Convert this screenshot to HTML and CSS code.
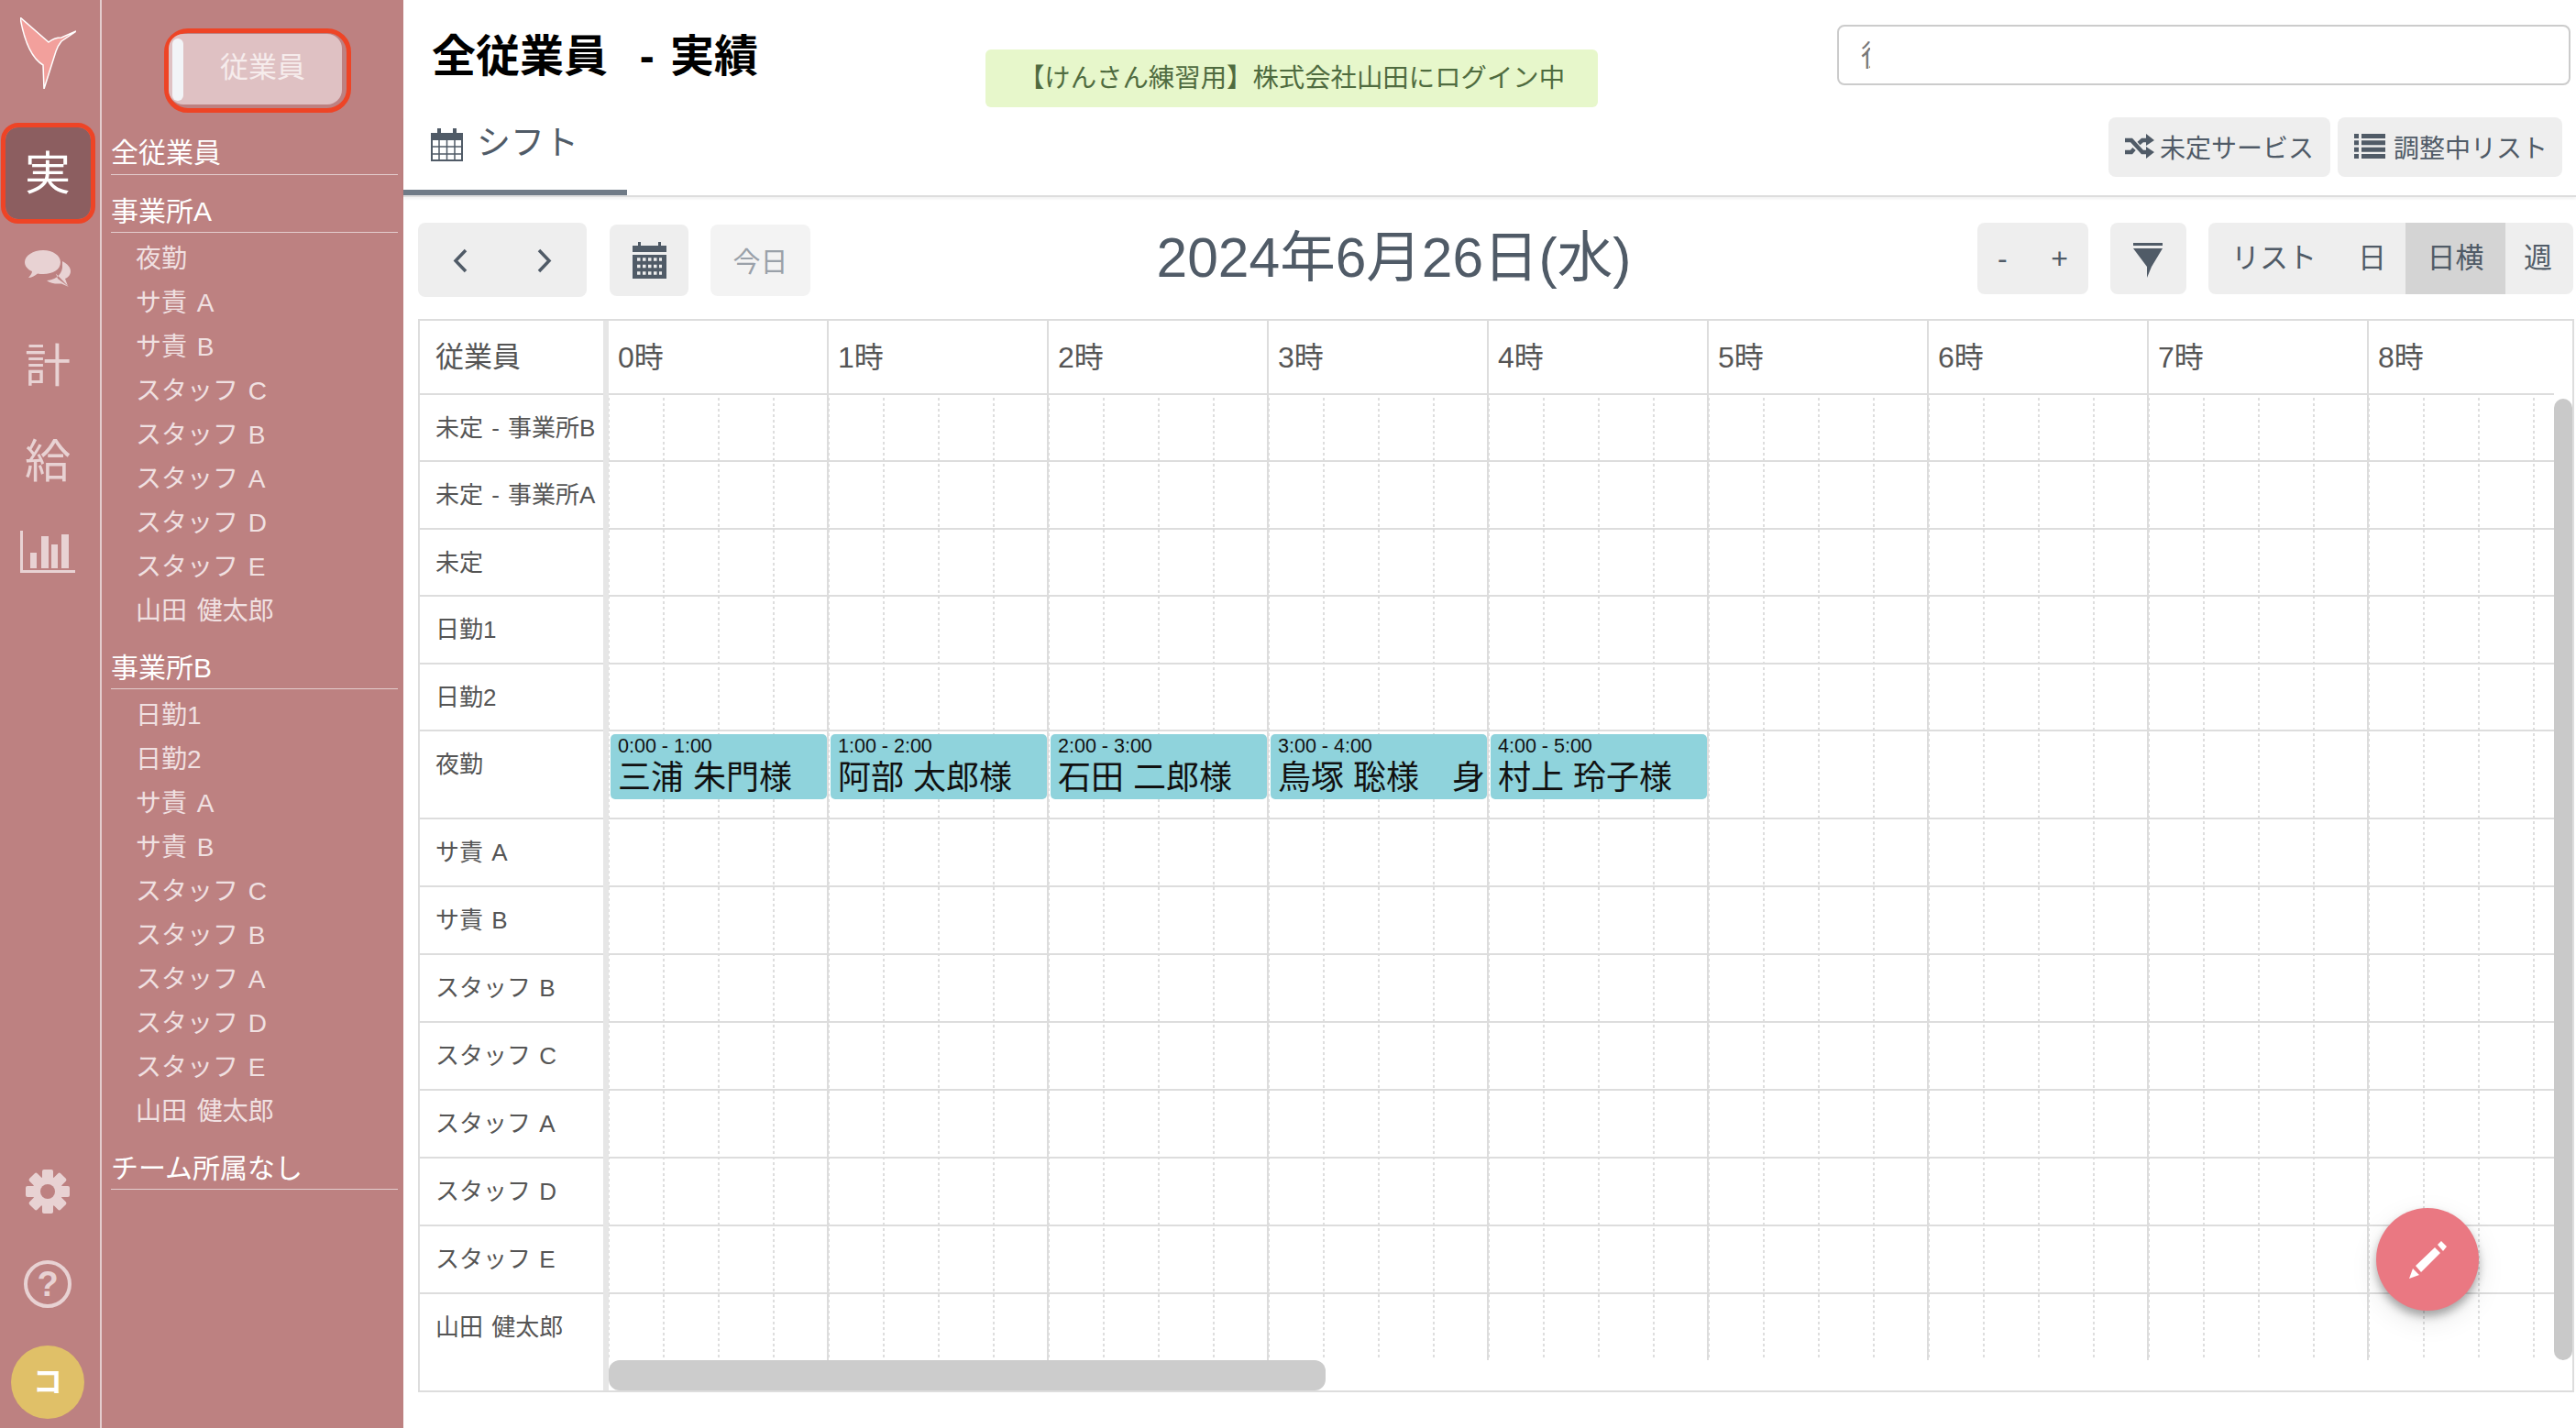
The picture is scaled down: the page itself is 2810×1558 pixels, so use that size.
FILE: index.html
```html
<!DOCTYPE html>
<html lang="ja">
<head>
  <meta charset="UTF-8" />
  <title>全従業員 - 実績</title>
  <link rel="stylesheet" href="styles.css">
</head>
<body>
  <nav class="rail">
    <svg class="logo" viewBox="0 0 61 78">
      <path d="M0 0 L31 27 Q37 22 45 22 L61 15 L45 26 Q41 31 39 37 L26 78 L25 52 Q7 41 0 0Z" fill="#f2a09c" stroke="#fff" stroke-width="1.5"/>
    </svg>
    <a class="rail-active">実</a>
    <svg class="rail-chat" viewBox="0 0 50 40">
      <path d="M34 25.5 L36 31 L48 40 L40 36.5 C33 37 28 36 24 33 C31 33 40 28 41 19 L41 12 C47 15 50 19 50 23 C50 27 47 30 44 31 L47 39 Z" fill="#e8d2d3"/>
      <path d="M20 0 C31 0 39 6 39 13 C39 21 31 26 20 26 C18 26 16 26 14 25.5 C11 28 7 30 4 30 C6 28 8 25 8 23 C3 21 0 17 0 13 C0 6 9 0 20 0Z" fill="#e8d2d3"/>
    </svg>
    <a class="rail-kanji rail-kei">計</a>
    <a class="rail-kanji rail-kyu">給</a>
    <svg class="rail-chart" viewBox="0 0 60 46">
      <path d="M0 0H3V43H60V46H0Z M11 24H18V41H11Z M23 6H31V41H23Z M34 15H41V41H34Z M45 4H53V41H45Z" fill="#e8d2d3" fill-rule="evenodd"/>
    </svg>
    <svg class="rail-gear" viewBox="0 0 48 48">
      <g fill="#e8d2d3">
        <rect x="18" y="0" width="12" height="48" rx="2"/>
        <rect x="18" y="0" width="12" height="48" rx="2" transform="rotate(45 24 24)"/>
        <rect x="18" y="0" width="12" height="48" rx="2" transform="rotate(90 24 24)"/>
        <rect x="18" y="0" width="12" height="48" rx="2" transform="rotate(135 24 24)"/>
      </g>
      <circle cx="24" cy="24" r="12" fill="none" stroke="#e8d2d3" stroke-width="9"/>
      <circle cx="24" cy="24" r="8" fill="#bd8181"/>
    </svg>
    <span class="rail-help">?</span>
    <span class="avatar">コ</span>
  </nav>

  <aside class="side">
    <div class="switch-ring">
      <div class="switch"><i class="knob"></i><span class="switch-label">従業員</span></div>
    </div>
    <div class="team-title team-first">全従業員</div>
    <div class="team-title">事業所A</div>
    <ul class="team">
      <li>夜勤</li>
      <li>サ責 A</li>
      <li>サ責 B</li>
      <li>スタッフ C</li>
      <li>スタッフ B</li>
      <li>スタッフ A</li>
      <li>スタッフ D</li>
      <li>スタッフ E</li>
      <li>山田 健太郎</li>
    </ul>
    <div class="team-title">事業所B</div>
    <ul class="team">
      <li>日勤1</li>
      <li>日勤2</li>
      <li>サ責 A</li>
      <li>サ責 B</li>
      <li>スタッフ C</li>
      <li>スタッフ B</li>
      <li>スタッフ A</li>
      <li>スタッフ D</li>
      <li>スタッフ E</li>
      <li>山田 健太郎</li>
    </ul>
    <div class="team-title">チーム所属なし</div>
  </aside>

  <main class="main">
    <div class="head-top">
      <h1 class="page-title">全従業員  - 実績</h1>
      <div class="login-note">【けんさん練習用】株式会社山田にログイン中</div>
      <div class="search"><span class="search-text">従</span></div>
    </div>

    <div class="head-tabs">
      <a class="tab">
        <svg class="tab-icon" viewBox="0 0 35 39">
          <path d="M1 8H34V37H1Z" fill="none" stroke="#505b67" stroke-width="2"/>
          <path d="M0 7H35V15H0Z M7 2H11V10H7Z M24 2H28V10H24Z" fill="#505b67"/>
          <path d="M0 22H35M0 30H35M9 14V38M17.500 14V38M26 14V38" stroke="#505b67" stroke-width="1.500"/>
        </svg>
        シフト
      </a>
      <div class="head-btns">
        <button class="head-btn">
          <svg class="shuffle" viewBox="0 0 32 27">
            <path d="M0 7H7L19 20H24M0 20H7L10 16.500M15 10.500L19 7H24" fill="none" stroke="#505b67" stroke-width="4.500"/>
            <path d="M23 0L32 7L23 13Z M23 14L32 20L23 27Z" fill="#505b67"/>
          </svg>未定サービス
        </button>
        <button class="head-btn">
          <svg class="list-icon" viewBox="0 0 34 27">
            <path d="M0 0H5V5H0Z M8 0H34V5H8Z M0 7.300H5V12.300H0Z M8 7.300H34V12.300H8Z M0 14.700H5V19.700H0Z M8 14.700H34V19.700H8Z M0 22H5V27H0Z M8 22H34V27H8Z" fill="#505b67"/>
          </svg>調整中リスト
        </button>
      </div>
    </div>

    <div class="toolbar">
      <div class="tool-left">
        <div class="tool-btn nav-btn">
          <svg class="chevron" viewBox="0 0 16 27"><path d="M14 2L3 13.500L14 25" fill="none" stroke="#505b67" stroke-width="3.500"/></svg>
          <svg class="chevron" viewBox="0 0 16 27"><path d="M2 2L13 13.500L2 25" fill="none" stroke="#505b67" stroke-width="3.500"/></svg>
        </div>
        <div class="tool-btn cal-btn">
          <svg class="cal-icon" viewBox="0 0 37 40">
            <path d="M0 4H37V11H0Z M6 0H9V5H6Z M28 0H31V5H28Z" fill="#505b67"/>
            <path d="M0 14H37V40H0Z" fill="#505b67"/>
            <path d="M5 19H32M5 26.500H32M5 34H32" stroke="#eee" stroke-width="3.500" stroke-dasharray="3.500 2.500" fill="none"/>
          </svg>
        </div>
        <div class="tool-btn today-btn">今日</div>
      </div>
      <div class="date-title">2024年6月26日(水)</div>
      <div class="tool-right">
        <div class="tool-btn zoom-btn"><span>-</span><span>+</span></div>
        <div class="tool-btn filter-btn">
          <svg class="filter-icon" viewBox="0 0 32 38">
            <path d="M0 0H32V3H0Z M0 6H32L20 26L15 38V26Z" fill="#505b67"/>
          </svg>
        </div>
        <div class="tool-btn view-btn">
          <span class="view-list">リスト</span>
          <span class="view-day">日</span>
          <span class="view-active">日横</span>
          <span class="view-week">週</span>
        </div>
      </div>
    </div>

    <section class="sched">
      <div class="names">
        <div class="name-head">従業員</div>
        <div class="name row-s">未定 - 事業所B</div>
        <div class="name row-s">未定 - 事業所A</div>
        <div class="name row-s">未定</div>
        <div class="name row-s">日勤1</div>
        <div class="name row-s">日勤2</div>
        <div class="name row-t">夜勤</div>
        <div class="name">サ責 A</div>
        <div class="name">サ責 B</div>
        <div class="name">スタッフ B</div>
        <div class="name">スタッフ C</div>
        <div class="name">スタッフ A</div>
        <div class="name">スタッフ D</div>
        <div class="name">スタッフ E</div>
        <div class="name name-last">山田 健太郎</div>
      </div>
      <div class="times">
        <div class="hours">
          <div class="hour">0時</div>
          <div class="hour">1時</div>
          <div class="hour">2時</div>
          <div class="hour">3時</div>
          <div class="hour">4時</div>
          <div class="hour">5時</div>
          <div class="hour">6時</div>
          <div class="hour">7時</div>
          <div class="hour">8時</div>
        </div>
        <div class="tracks">
          <div class="track row-s"></div>
          <div class="track row-s"></div>
          <div class="track row-s"></div>
          <div class="track row-s"></div>
          <div class="track row-s"></div>
          <div class="track row-t events">
            <div class="event"><div class="event-time">0:00 - 1:00</div><div class="event-name">三浦 朱門様</div></div>
            <div class="event"><div class="event-time">1:00 - 2:00</div><div class="event-name">阿部 太郎様</div></div>
            <div class="event"><div class="event-time">2:00 - 3:00</div><div class="event-name">石田 二郎様</div></div>
            <div class="event"><div class="event-time">3:00 - 4:00</div><div class="event-name">鳥塚 聡様　身</div></div>
            <div class="event"><div class="event-time">4:00 - 5:00</div><div class="event-name">村上 玲子様</div></div>
          </div>
          <div class="track"></div>
          <div class="track"></div>
          <div class="track"></div>
          <div class="track"></div>
          <div class="track"></div>
          <div class="track"></div>
          <div class="track"></div>
        </div>
        <div class="hbar"><div class="hbar-thumb"></div></div>
        <div class="vbar"></div>
      </div>
      <button class="fab">
        <svg class="fab-icon" viewBox="0 0 41 41">
          <path d="M0 41L4 30L11 37Z M7 27L28 7L34 13L13 34Z M31 4L35 0L41 6L37 11Z" fill="#fff"/>
        </svg>
      </button>
    </section>
  </main>
</body>
</html>
```

FILE: styles.css
```css
* {
  box-sizing: border-box;
}
html, body {
  margin: 0;
  height: 100%;
}
body {
  display: flex;
  width: 2810px;
  height: 1558px;
  overflow: hidden;
  background: #fff;
  color: #505b67;
  font-family: "Liberation Sans", "Noto Sans CJK JP", sans-serif;
}

/* icon rail */
.rail {
  flex: 0 0 111px;
  display: flex;
  flex-direction: column;
  align-items: center;
  padding-right: 5px;
  background: #bd8181;
  border-right: 2px solid #e3cdce;
}
.logo {
  width: 61px;
  height: 78px;
  margin-top: 19px;
}
.rail-active {
  width: 93px;
  height: 100px;
  margin-top: 42px;
  border-radius: 14px;
  outline: 5px solid #ee4426;
  background: #8c5e60;
  color: #fff;
  font-size: 50px;
  line-height: 102px;
  text-align: center;
}
.rail-chat {
  width: 50px;
  height: 40px;
  margin-top: 34px;
}
.rail-kanji {
  color: #e8d2d3;
  font-size: 50px;
  line-height: 50px;
}
.rail-kei {
  margin-top: 62px;
}
.rail-kyu {
  margin-top: 54px;
}
.rail-chart {
  width: 60px;
  height: 46px;
  margin-top: 50px;
}
.rail-gear {
  width: 48px;
  height: 48px;
  margin-top: auto;
}
.rail-help {
  width: 52px;
  height: 52px;
  margin-top: 51px;
  border: 4px solid #e8d2d3;
  border-radius: 50%;
  color: #e8d2d3;
  font-size: 38px;
  font-weight: 700;
  line-height: 44px;
  text-align: center;
}
.avatar {
  width: 80px;
  height: 80px;
  margin-top: 41px;
  margin-bottom: 10px;
  border-radius: 50%;
  background: #e0c068;
  color: #fff;
  font-size: 32px;
  font-weight: 700;
  line-height: 80px;
  text-align: center;
}

/* team list */
.side {
  flex: 0 0 329px;
  padding: 31px 6px 0 10px;
  background: #bd8181;
  color: #fff;
}
.switch-ring {
  width: 204px;
  height: 92px;
  margin-left: 58px;
  padding: 1px 5px 3px 0;
  border: 5px solid #ee4426;
  border-radius: 26px;
}
.switch {
  display: flex;
  align-items: center;
  height: 77px;
  padding-left: 4px;
  border-radius: 16px;
  background: #dfc1c3;
}
.knob {
  width: 12px;
  height: 68px;
  border-radius: 6px;
  background: #f2f4f7;
}
.switch-label {
  flex: 1;
  padding-bottom: 10px;
  color: #f6ecec;
  font-size: 31px;
  text-align: center;
}
.team-title {
  margin-top: 19px;
  padding-bottom: 3px;
  border-bottom: 1px solid #e3cdce;
  font-size: 30px;
  line-height: 38px;
}
.team-first {
  margin-top: 25px;
  padding-bottom: 4px;
}
.team-first + .team-title {
  margin-top: 21px;
}
.team {
  margin: 5px 0 0;
  padding: 0 0 0 27px;
  list-style: none;
  color: #f0e0e1;
  font-size: 28px;
  line-height: 48px;
  word-spacing: 3px;
}

/* header */
.main {
  flex: 1;
  display: flex;
  flex-direction: column;
  min-width: 0;
}
.head-top {
  display: flex;
  align-items: flex-start;
  height: 128px;
  padding-left: 31px;
}
.page-title {
  flex: 0 0 604px;
  margin: 32px 0 0;
  color: #000;
  font-size: 48px;
  font-weight: 700;
  line-height: 60px;
  white-space: pre;
  word-spacing: 4px;
}
.login-note {
  flex: 0 0 668px;
  height: 63px;
  margin-top: 54px;
  border-radius: 6px;
  background: #e7f7cb;
  color: #4f6b3f;
  font-size: 28.4px;
  line-height: 62px;
  text-align: center;
}
.search {
  flex: 0 0 800px;
  height: 66px;
  margin-top: 27px;
  margin-left: 261px;
  padding: 16px 0 0 24px;
  border: 2px solid #ccc;
  border-radius: 8px;
}
.search-text {
  display: block;
  width: 10px;
  overflow: hidden;
  color: #777;
  font-size: 32px;
  line-height: 32px;
}
.head-tabs {
  display: flex;
  justify-content: space-between;
  height: 87px;
  border-bottom: 2px solid #ddd;
  box-shadow: 0 2px 3px rgba(0, 0, 0, .06);
}
.tab {
  display: flex;
  gap: 15px;
  width: 244px;
  height: 85px;
  padding: 10px 0 0 30px;
  border-bottom: 6px solid #707b87;
  font-size: 37px;
  line-height: 37px;
}
.tab-icon {
  width: 35px;
  height: 39px;
}
.head-btns {
  display: flex;
  gap: 8px;
  height: 65px;
  margin-right: 15px;
}
.head-btn {
  display: flex;
  align-items: center;
  padding: 0 0 2px 18px;
  border: none;
  border-radius: 8px;
  background: #eee;
  color: #505b67;
  font-family: inherit;
  font-size: 28px;
}
.head-btn:first-child {
  width: 242px;
}
.head-btn:last-child {
  width: 245px;
}
.shuffle {
  width: 32px;
  height: 27px;
  margin-right: 6px;
}
.list-icon {
  width: 34px;
  height: 27px;
  margin-right: 9px;
}

/* toolbar */
.toolbar {
  display: flex;
  justify-content: space-between;
  align-items: flex-start;
  height: 81px;
  margin-top: 28px;
  padding: 0 3px 0 16px;
}
.tool-left, .tool-right {
  display: flex;
  align-items: flex-start;
}
.tool-btn {
  display: flex;
  align-items: center;
  border-radius: 8px;
  background: #eee;
}
.nav-btn {
  justify-content: space-between;
  width: 184px;
  height: 81px;
  padding: 2px 38px 0 38px;
}
.chevron {
  width: 16px;
  height: 27px;
}
.cal-btn {
  justify-content: center;
  width: 86px;
  height: 78px;
  margin: 2px 0 0 25px;
}
.cal-icon {
  width: 37px;
  height: 40px;
}
.today-btn {
  justify-content: center;
  width: 109px;
  height: 78px;
  margin: 2px 0 0 24px;
  padding-bottom: 2px;
  background: #f3f3f3;
  color: #9aa1a9;
  font-size: 30px;
}
.date-title {
  font-size: 60.5px;
  line-height: 76px;
  white-space: nowrap;
}
.zoom-btn {
  justify-content: space-between;
  width: 121px;
  height: 78px;
  padding: 0 22px;
  font-size: 32px;
}
.filter-btn {
  justify-content: center;
  width: 83px;
  height: 78px;
  margin-left: 24px;
  padding-top: 4px;
}
.filter-icon {
  width: 32px;
  height: 38px;
}
.view-btn {
  width: 398px;
  height: 78px;
  margin-left: 24px;
  overflow: hidden;
  font-size: 31px;
  line-height: 78px;
}
.view-list {
  margin-left: 25px;
}
.view-day {
  margin-left: 45px;
}
.view-active {
  width: 109px;
  height: 78px;
  margin-left: 21px;
  background: #d4d4d4;
  text-align: center;
}
.view-week {
  margin-left: 20px;
}

/* schedule */
.sched {
  position: relative;
  display: flex;
  height: 1171px;
  margin: 24px 2px 0 16px;
  border: 2px solid #ddd;
  color: #555;
}
.names {
  flex: 0 0 206px;
  border-right: 6px solid #e6e6e6;
  font-size: 26px;
}
.name-head {
  height: 81px;
  padding-left: 17px;
  border-bottom: 2px solid #ddd;
  font-size: 31px;
  line-height: 80px;
}
.name {
  height: 74px;
  padding-left: 17px;
  border-bottom: 2px solid #ddd;
  line-height: 72px;
  white-space: nowrap;
  word-spacing: 2px;
}
.name-last {
  border-bottom: none;
}
.times {
  position: relative;
  flex: 1;
  display: flex;
  flex-direction: column;
  min-width: 0;
}
.hours {
  display: flex;
  flex: 0 0 81px;
  margin-right: 20px;
  overflow: hidden;
  border-bottom: 2px solid #ddd;
  font-size: 32px;
  line-height: 80px;
}
.hour {
  flex: 0 0 240px;
  padding-left: 10px;
  border-right: 2px solid #ddd;
}
.tracks {
  flex: 1;
  min-height: 0;
  overflow: hidden;
  background:
    linear-gradient(90deg, #ddd 2px, transparent 2px) -2px 0 / 240px 100%,
    repeating-linear-gradient(#fff 0 3px, transparent 3px 6px),
    linear-gradient(90deg, #dedede 2px, transparent 2px) -1px 0 / 60px 100%;
}
.track {
  height: 74px;
  margin-right: 20px;
  border-bottom: 2px solid #ddd;
}
.row-s {
  height: 73.4px;
}
.row-t {
  height: 96.5px;
}
.events {
  display: flex;
  gap: 4px;
  padding: 3px 0 0 2px;
}
.event {
  flex: 0 0 236px;
  height: 71px;
  padding-left: 8px;
  overflow: hidden;
  border-radius: 5px;
  background: #8fd3dc;
  color: #111;
  white-space: nowrap;
}
.event-time {
  font-size: 21.5px;
  line-height: 26px;
}
.event-name {
  font-size: 36px;
  line-height: 44px;
}
.hbar {
  flex: 0 0 33px;
}
.hbar-thumb {
  width: 782px;
  height: 33px;
  border-radius: 12px;
  background: #ccc;
}
.vbar {
  position: absolute;
  top: 85px;
  right: 0;
  bottom: 33px;
  width: 20px;
  border-radius: 10px;
  background: #c9c9c9;
}
.fab {
  position: absolute;
  right: 102px;
  top: 968px;
  width: 112px;
  height: 112px;
  padding: 0;
  border: none;
  border-radius: 50%;
  background: #ea7882;
  box-shadow: 0 6px 10px rgba(0, 0, 0, .3), 0 10px 30px rgba(0, 0, 0, .1);
}
.fab-icon {
  display: block;
  width: 41px;
  height: 41px;
  margin: 0 auto;
}
```
